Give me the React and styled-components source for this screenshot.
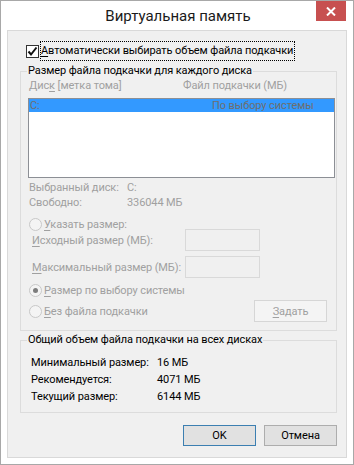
import React from "react";
import styled, { createGlobalStyle } from "styled-components";

const GlobalStyle = createGlobalStyle`
  html, body {
    margin: 0;
    padding: 0;
    background: #ffffff;
  }
  body {
    font-family: Roboto, "Noto Sans", "DejaVu Sans", sans-serif;
    font-size: 11px;
    letter-spacing: -0.1px;
    color: #000;
    white-space: nowrap;
  }
  * {
    box-sizing: border-box;
  }
`;

const Window = styled.div`
  width: 354px;
  height: 465px;
  border: 1px solid #a8a8a8;
  background: #ffffff;
  display: flex;
  flex-direction: column;
`;

const TitleBar = styled.div`
  height: 29px;
  display: grid;
  grid-template-columns: 1fr auto 1fr;
  align-items: start;
`;

const Title = styled.div`
  grid-column: 2;
  font-size: 15px;
  letter-spacing: 0;
  line-height: 30px;
  color: #1b1b1b;
  padding-left: 2px;
`;

const CloseButton = styled.div`
  grid-column: 3;
  justify-self: end;
  width: 30px;
  height: 20px;
  margin-right: 7px;
  background: #c75050;
  display: flex;
  align-items: center;
  justify-content: center;
`;

const Client = styled.div`
  flex: 1;
  margin: 0 6px 6px 6px;
  border: 1px solid #d9d9d9;
  background: #f0f0f0;
  padding: 11px 9px 0 12px;
  display: flex;
  flex-direction: column;
`;

const CheckRow = styled.div`
  height: 18px;
  margin-left: 6px;
  display: flex;
  align-items: center;
  gap: 2px;
`;

const CheckBox = styled.div`
  width: 13px;
  height: 13px;
  border: 1px solid #333;
  background: #fff;
  display: flex;
  align-items: center;
  justify-content: center;
`;

const FocusLabel = styled.span`
  outline: 1px dotted #000;
  outline-offset: 0;
  padding: 1px 1px 1px 0;
  line-height: 16px;
`;

const Group = styled.fieldset`
  margin: ${(p) => p.$top}px 0 0 0;
  padding: 0 0 ${(p) => p.$bottom}px 0;
  border: 1px solid #dcdcdc;
  min-width: 0;
`;

const Legend = styled.legend`
  margin-left: 6px;
  padding: 0 1px;
  line-height: 14px;
  color: #000;
`;

const Headers = styled.div`
  height: 12px;
  line-height: 12px;
  margin-top: 2px;
  padding-left: 8px;
  display: grid;
  grid-template-columns: 154px 1fr;
  color: #a0a0a0;
`;

const ListBox = styled.div`
  margin: 6px 0 0 7px;
  width: 307px;
  height: 80px;
  border: 1px solid #8c8f95;
  background: #fff;
`;

const ListRow = styled.div`
  height: 13px;
  line-height: 13px;
  background: #3399ff;
  color: #6f6f6f;
  display: grid;
  grid-template-columns: 182px 1fr;
  padding-left: 1px;
`;

const InfoRow = styled.div`
  height: 15px;
  line-height: 15px;
  margin-top: ${(p) => p.$top || 0}px;
  padding-left: 8px;
  display: grid;
  grid-template-columns: ${(p) => p.$label}px 1fr;
  color: ${(p) => (p.$disabled ? "#a0a0a0" : "#000")};
`;

const SumRow = styled(InfoRow)`
  height: 17px;
  line-height: 17px;
  padding-left: 10px;
`;

const RadioRow = styled.div`
  height: ${(p) => p.$height || 14}px;
  margin-top: ${(p) => p.$top}px;
  margin-left: 8px;
  display: flex;
  align-items: center;
  gap: 2px;
  color: #a0a0a0;
`;

const Radio = styled.div`
  width: 13px;
  height: 13px;
  border-radius: 50%;
  border: 1px solid #c8c8c8;
  background: #f4f4f4;
  display: flex;
  align-items: center;
  justify-content: center;
  &::after {
    content: "";
    width: 5px;
    height: 5px;
    border-radius: 50%;
    background: ${(p) => (p.$checked ? "#7d7d7d" : "transparent")};
  }
`;

const SizeRow = styled.div`
  height: 22px;
  margin-top: ${(p) => p.$top}px;
  padding-left: 11px;
  display: grid;
  grid-template-columns: 153px 75px;
  align-items: center;
  color: #a0a0a0;
`;

const TextField = styled.div`
  height: 22px;
  border: 1px solid #d9d9d9;
  background: #f0f0f0;
`;

const LastRow = styled.div`
  height: 22px;
  margin-top: 3px;
  padding-right: 9px;
  display: flex;
  align-items: center;
  justify-content: space-between;
`;

const Button = styled.div`
  width: 73px;
  height: ${(p) => p.$height || 21}px;
  display: flex;
  align-items: center;
  justify-content: center;
  border: 1px solid ${(p) => (p.$default ? "#3c7fb1" : p.$disabled ? "#d6d6d6" : "#adadad")};
  background: ${(p) => (p.$disabled ? "#f4f4f4" : "#e1e1e1")};
  color: ${(p) => (p.$disabled ? "#a0a0a0" : "#000")};
`;

const ButtonRow = styled.div`
  margin-top: 12px;
  display: flex;
  justify-content: flex-end;
  gap: 8px;
`;

const U = styled.span`
  text-decoration: underline;
  text-underline-offset: 2px;
`;

export default function App() {
  return (
    <>
      <GlobalStyle />
      <Window>
        <TitleBar>
          <Title>Виртуальная память</Title>
          <CloseButton>
            <svg width="10" height="9" viewBox="0 0 10 9">
              <path d="M1 0.5 L9 8.5 M9 0.5 L1 8.5" stroke="#fff" strokeWidth="2" />
            </svg>
          </CloseButton>
        </TitleBar>
        <Client>
          <CheckRow>
            <CheckBox>
              <svg width="11" height="11" viewBox="0 0 11 11">
                <path d="M1.5 5.5 L4 8.5 L9.5 1.5" stroke="#111" strokeWidth="2" fill="none" />
              </svg>
            </CheckBox>
            <FocusLabel>
              <U>А</U>втоматически выбирать объем файла подкачки
            </FocusLabel>
          </CheckRow>

          <Group $top={4} $bottom={8}>
            <Legend>Размер файла подкачки для каждого диска</Legend>
            <Headers>
              <span>
                Дис<U>к</U> [метка тома]
              </span>
              <span>Файл подкачки (МБ)</span>
            </Headers>
            <ListBox>
              <ListRow>
                <span>C:</span>
                <span>По выбору системы</span>
              </ListRow>
            </ListBox>
            <InfoRow $top={2} $label={98} $disabled>
              <span>Выбранный диск:</span>
              <span>C:</span>
            </InfoRow>
            <InfoRow $label={98} $disabled>
              <span>Свободно:</span>
              <span>336044 МБ</span>
            </InfoRow>
            <RadioRow $top={7}>
              <Radio />
              <span>
                <U>У</U>казать размер:
              </span>
            </RadioRow>
            <SizeRow $top={-2}>
              <span>
                <U>И</U>сходный размер (МБ):
              </span>
              <TextField />
            </SizeRow>
            <SizeRow $top={5}>
              <span>
                <U>М</U>аксимальный размер (МБ):
              </span>
              <TextField />
            </SizeRow>
            <RadioRow $top={5}>
              <Radio $checked />
              <span>
                <U>Р</U>азмер по выбору системы
              </span>
            </RadioRow>
            <LastRow>
              <RadioRow $top={0}>
                <Radio />
                <span>
                  <U>Б</U>ез файла подкачки
                </span>
              </RadioRow>
              <Button $disabled $height={22}>
                <span>
                  <U>З</U>адать
                </span>
              </Button>
            </LastRow>
          </Group>

          <Group $top={2} $bottom={7}>
            <Legend>Общий объем файла подкачки на всех дисках</Legend>
            <SumRow $top={7} $label={126}>
              <span>Минимальный размер:</span>
              <span>16 МБ</span>
            </SumRow>
            <SumRow $label={126}>
              <span>Рекомендуется:</span>
              <span>4071 МБ</span>
            </SumRow>
            <SumRow $label={126}>
              <span>Текущий размер:</span>
              <span>6144 МБ</span>
            </SumRow>
          </Group>

          <ButtonRow>
            <Button $default>OK</Button>
            <Button>Отмена</Button>
          </ButtonRow>
        </Client>
      </Window>
    </>
  );
}
